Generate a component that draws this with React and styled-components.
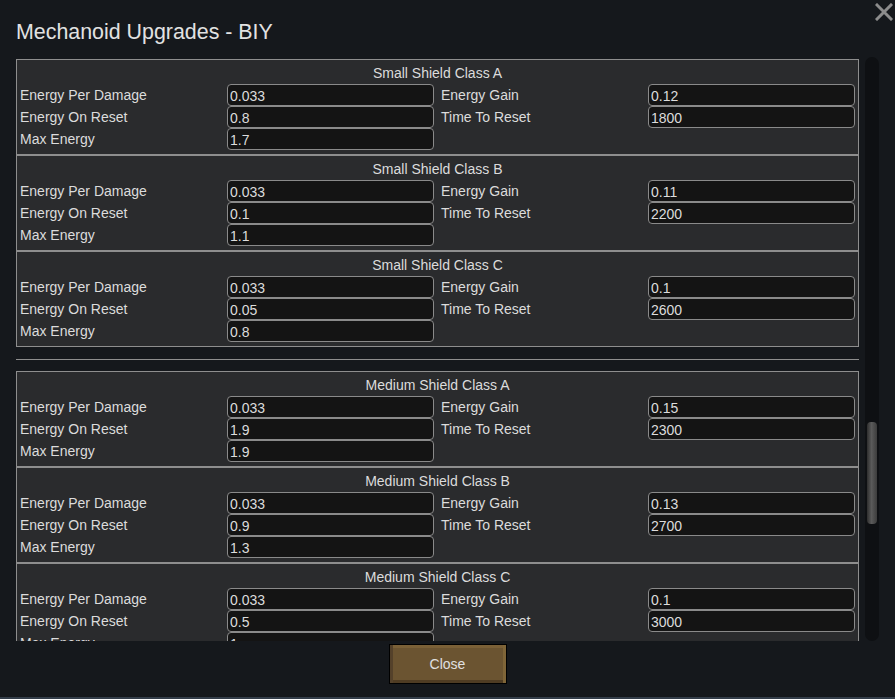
import React from 'react'
import styled, { createGlobalStyle } from 'styled-components'

const GlobalStyle = createGlobalStyle`
    html, body {
        margin:0;
        padding:0;
        background:#15181c;
    }
    body {
        font-family:"Liberation Sans", Arial, sans-serif;
        color:#dcdcdc;
    }
`

const groups = [
    [
        { name: 'Small Shield Class A', epd: '0.033', gain: '0.12', reset: '0.8', time: '1800', max: '1.7' },
        { name: 'Small Shield Class B', epd: '0.033', gain: '0.11', reset: '0.1', time: '2200', max: '1.1' },
        { name: 'Small Shield Class C', epd: '0.033', gain: '0.1', reset: '0.05', time: '2600', max: '0.8' },
    ],
    [
        { name: 'Medium Shield Class A', epd: '0.033', gain: '0.15', reset: '1.9', time: '2300', max: '1.9' },
        { name: 'Medium Shield Class B', epd: '0.033', gain: '0.13', reset: '0.9', time: '2700', max: '1.3' },
        { name: 'Medium Shield Class C', epd: '0.033', gain: '0.1', reset: '0.5', time: '3000', max: '1' },
    ],
]

const ShieldPanel = ({ shield }) => (
    <Panel>
        <PanelTitle>{shield.name}</PanelTitle>
        <Fields>
            <Label>Energy Per Damage</Label>
            <Field defaultValue={shield.epd} />
            <Label right>Energy Gain</Label>
            <Field defaultValue={shield.gain} />
            <Label>Energy On Reset</Label>
            <Field defaultValue={shield.reset} />
            <Label right>Time To Reset</Label>
            <Field defaultValue={shield.time} />
            <Label>Max Energy</Label>
            <Field defaultValue={shield.max} />
        </Fields>
    </Panel>
)

const App = () => {
    return (
        <Window>
            <GlobalStyle />
            <CloseX aria-label="close">
                <svg width="18" height="18" viewBox="0 0 18 18">
                    <path d="M2 2 L16 16 M16 2 L2 16" stroke="#8c8c8c" strokeWidth="3" strokeLinecap="square" />
                </svg>
            </CloseX>
            <Title>Mechanoid Upgrades - BIY</Title>
            <Body>
                <Viewport>
                    {groups.map((group, i) => (
                        <React.Fragment key={i}>
                            {i > 0 && <Separator />}
                            {group.map(s => <ShieldPanel key={s.name} shield={s} />)}
                        </React.Fragment>
                    ))}
                </Viewport>
                <Track>
                    <Thumb />
                </Track>
            </Body>
            <Footer>
                <CloseButton>Close</CloseButton>
            </Footer>
        </Window>
    )
}

const Window = styled.div`
    position:relative;
    height:697px;
    padding:0 16px;
    display:flex;
    flex-direction:column;
    border-bottom:2px solid #333d49;
    overflow:hidden;
`
const CloseX = styled.div`
    position:absolute;
    top:3px;
    right:2px;
    width:18px;
    height:18px;
    cursor:pointer;
`
const Title = styled.h1`
    margin:0;
    height:57px;
    box-sizing:border-box;
    padding-top:20px;
    font-size:21.4px;
    line-height:25px;
    font-weight:normal;
    color:#e2e2e2;
`
const Body = styled.div`
    display:flex;
    flex-direction:row;
    gap:6px;
    height:584px;
`
const Viewport = styled.div`
    width:844px;
    padding-top:2px;
    overflow:hidden;
`
const Panel = styled.div`
    background:#2a2b2d;
    border:1px solid #8e8e8e;
    padding:0 3px 4px 3px;
`
const PanelTitle = styled.div`
    height:24px;
    line-height:26px;
    text-align:center;
    font-size:14px;
    color:#dcdcdc;
`
const Fields = styled.div`
    display:grid;
    grid-template-columns:207px 207px 214px 207px;
    grid-auto-rows:22px;
`
const Label = styled.div`
    font-size:14px;
    line-height:22px;
    padding-left:${p => (p.right ? '7px' : '0')};
    color:#dcdcdc;
    white-space:nowrap;
`
const Field = styled.input`
    box-sizing:border-box;
    width:207px;
    height:22px;
    margin:0;
    padding:1px 2px 0 2px;
    background:#141414;
    border:1px solid #8a8a8a;
    border-radius:4px;
    color:#dcdcdc;
    font-family:"Liberation Sans", Arial, sans-serif;
    font-size:14px;
    outline:none;
`
const Separator = styled.div`
    height:1px;
    background:#8e8e8e;
    margin:12px 0 11px 0;
`
const Track = styled.div`
    position:relative;
    width:14px;
    height:584px;
    background:#0e1013;
    border-radius:7px;
`
const Thumb = styled.div`
    position:absolute;
    left:2px;
    top:365px;
    width:10px;
    height:102px;
    border-radius:4px;
    background:linear-gradient(to right, #2e2e2e, #5a5a5a 45%, #3c3c3c);
`
const Footer = styled.div`
    display:flex;
    justify-content:center;
    padding-top:3px;
`
const CloseButton = styled.button`
    width:118px;
    height:40px;
    box-sizing:border-box;
    background:#6b5431;
    border:1px solid #000;
    box-shadow:inset 3px 0 0 #54412a, inset -3px 0 0 #7f6538, inset 0 3px 0 #7a6037, inset 0 -3px 0 #4f3c23;
    color:#e0e0e0;
    font-family:"Liberation Sans", Arial, sans-serif;
    font-size:14px;
    cursor:pointer;
`

export default App
